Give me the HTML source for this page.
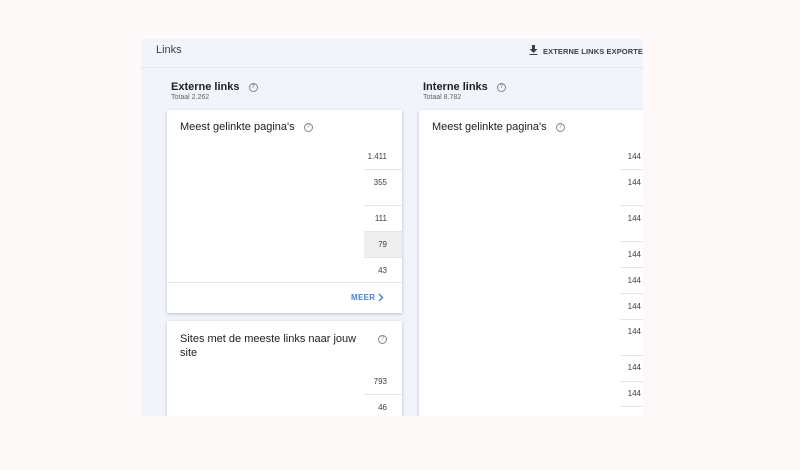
<!DOCTYPE html>
<html><head><meta charset="utf-8"><style>
*{margin:0;padding:0;box-sizing:border-box}
body{width:800px;height:470px;background:#fcf9f8;font-family:"Liberation Sans",Arial,sans-serif;position:relative;overflow:hidden;color:#202124}
.panel{position:absolute;left:141px;top:39px;width:502px;height:377px;background:#f1f4fb;overflow:hidden;border-radius:4px 0 0 0}
.a{position:absolute}
.card{position:absolute;background:#fff;box-shadow:0 1px 3px rgba(60,64,67,.3)}
.num{position:absolute;font-size:8px;color:#3c4043;text-align:right;width:40px}
.ln{position:absolute;height:1px;background:#e3e5e8}
.q{display:inline-block;width:9px;height:9px;border:1px solid #80868b;border-radius:50%;font-size:6px;line-height:7px;text-align:center;color:#80868b;vertical-align:middle}
</style></head><body>
<div class="panel">
<div class="a" style="left:15px;top:5px;font-size:11px;color:#3c4043">Links</div>
<div class="a" style="left:388px;top:6px;font-size:7.5px;font-weight:bold;color:#3c4043;letter-spacing:.1px;white-space:nowrap">
<svg width="9" height="10" viewBox="0 0 9 10" style="vertical-align:-1px;margin-right:5px"><path d="M3 0h3v4h2.5L4.5 8 .5 4H3z M0.5 9h8v1h-8z" fill="#3c4043"/></svg>EXTERNE LINKS EXPORTEREN</div>
<div class="a" style="left:0;top:28px;width:502px;height:1px;background:#e3e6ee"></div>

<div class="a" style="left:30px;top:42px;font-size:11px;font-weight:bold;color:#202124">Externe links <span class="q" style="margin-left:6px">?</span></div>
<div class="a" style="left:30px;top:55px;font-size:7px;color:#5f6368">Totaal 2.262</div>
<div class="a" style="left:282px;top:42px;font-size:11px;font-weight:bold;color:#202124">Interne links <span class="q" style="margin-left:6px">?</span></div>
<div class="a" style="left:282px;top:55px;font-size:7px;color:#5f6368">Totaal 8.782</div>

<div class="card" style="left:26px;top:71px;width:235px;height:203px">
<div class="a" style="left:13px;top:11px;font-size:11px">Meest gelinkte pagina's <span class="q" style="margin-left:6px">?</span></div>
<div class="a" style="left:197px;top:121px;width:38px;height:26px;background:#eeeeee"></div>
<div class="num" style="left:180px;top:42px">1.411</div>
<div class="num" style="left:180px;top:68px">355</div>
<div class="num" style="left:180px;top:104px">111</div>
<div class="num" style="left:180px;top:130px">79</div>
<div class="num" style="left:180px;top:156px">43</div>
<div class="ln" style="left:197px;width:38px;top:59px"></div>
<div class="ln" style="left:197px;width:38px;top:95px"></div>
<div class="ln" style="left:197px;width:38px;top:121px"></div>
<div class="ln" style="left:197px;width:38px;top:147px"></div>
<div class="ln" style="left:0;width:235px;top:172px"></div>
<div class="a" style="left:184px;top:183px;font-size:8px;font-weight:bold;color:#4a7fd6;letter-spacing:.3px">MEER</div>
<svg class="a" style="left:211px;top:183px" width="6" height="9" viewBox="0 0 6 9"><path d="M1 1l3.5 3.5L1 8" stroke="#4a7fd6" stroke-width="1.4" fill="none"/></svg>
</div>

<div class="card" style="left:26px;top:282px;width:235px;height:110px">
<div class="a" style="left:13px;top:11px;font-size:11px;line-height:14px;width:180px">Sites met de meeste links naar jouw site</div>
<span class="q a" style="left:211px;top:14px">?</span>
<div class="num" style="left:180px;top:56px">793</div>
<div class="num" style="left:180px;top:82px">46</div>
<div class="ln" style="left:197px;width:38px;top:73px"></div>
</div>

<div class="card" style="left:278px;top:71px;width:240px;height:320px">
<div class="a" style="left:13px;top:11px;font-size:11px">Meest gelinkte pagina's <span class="q" style="margin-left:6px">?</span></div>
<div class="num" style="left:182px;top:42px">144</div>
<div class="num" style="left:182px;top:68px">144</div>
<div class="num" style="left:182px;top:104px">144</div>
<div class="num" style="left:182px;top:140px">144</div>
<div class="num" style="left:182px;top:166px">144</div>
<div class="num" style="left:182px;top:192px">144</div>
<div class="num" style="left:182px;top:217px">144</div>
<div class="num" style="left:182px;top:253px">144</div>
<div class="num" style="left:182px;top:279px">144</div>
<div class="ln" style="left:201px;width:40px;top:59px"></div>
<div class="ln" style="left:201px;width:40px;top:95px"></div>
<div class="ln" style="left:201px;width:40px;top:131px"></div>
<div class="ln" style="left:201px;width:40px;top:157px"></div>
<div class="ln" style="left:201px;width:40px;top:183px"></div>
<div class="ln" style="left:201px;width:40px;top:209px"></div>
<div class="ln" style="left:201px;width:40px;top:245px"></div>
<div class="ln" style="left:201px;width:40px;top:271px"></div>
<div class="ln" style="left:201px;width:40px;top:296px"></div>
</div>
</div>
</body></html>
